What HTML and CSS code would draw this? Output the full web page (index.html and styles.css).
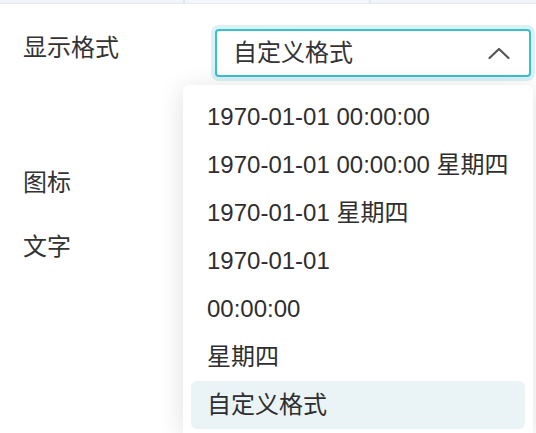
FILE: index.html
```html
<!DOCTYPE html>
<html lang="zh-CN">
<head>
<meta charset="utf-8">
<title>显示格式</title>
<link rel="stylesheet" href="styles.css">
</head>
<body>
<div class="topbar">
  <div class="cell cell-a"></div>
  <div class="cell cell-b"></div>
  <div class="cell cell-c"></div>
</div>
<div class="form">
  <div class="row row-first">
    <div class="label label-first">显示格式</div>
    <div class="field">
      <div class="select">
        <span class="select-value">自定义格式</span>
        <svg class="chevron" width="22" height="12" viewBox="0 0 22 12">
          <polyline points="1.5,11 11,2 20.5,11" fill="none" stroke="#555" stroke-width="2.2" stroke-linecap="round" stroke-linejoin="round"/>
        </svg>
      </div>
      <div class="dropdown">
        <div class="option">1970-01-01 00:00:00</div>
        <div class="option">1970-01-01 00:00:00 星期四</div>
        <div class="option">1970-01-01 星期四</div>
        <div class="option">1970-01-01</div>
        <div class="option">00:00:00</div>
        <div class="option">星期四</div>
        <div class="option selected">自定义格式</div>
      </div>
    </div>
  </div>
  <div class="row row-icon">
    <div class="label">图标</div>
  </div>
  <div class="row">
    <div class="label">文字</div>
  </div>
</div>
</body>
</html>
```
FILE: styles.css
```css
* { box-sizing: border-box; }
html, body { margin: 0; padding: 0; }
body {
  width: 536px;
  height: 433px;
  overflow: hidden;
  background: #ffffff;
  color: #333333;
  font-family: "Liberation Sans", "Noto Sans CJK SC", sans-serif;
  font-size: 24px;
}
.topbar {
  display: flex;
  height: 4px;
  gap: 2px;
  background: #e3e8ee;
  border-bottom: 1px solid #e6ebf1;
}
.cell { height: 3px; background: #f1f4f8; }
.cell-a { width: 183px; }
.cell-b { width: 184px; background: #f3f6fa; }
.cell-c { flex: 1; }
.form {
  padding: 25px 0 0 23px;
}
.row {
  display: flex;
  align-items: flex-start;
  height: 64px;
}
.row-first {
  height: 48px;
  margin-bottom: 74px;
}
.label {
  width: 192px;
  line-height: 64px;
  height: 64px;
}
.label-first {
  line-height: 34px;
  height: 34px;
  margin-top: 2px;
}
.field {
  position: relative;
  width: 316px;
}
.select {
  height: 48px;
  border: 2px solid #3bbfcc;
  border-radius: 4px;
  box-shadow: 0 0 0 4px rgba(59, 191, 204, 0.2);
  display: flex;
  align-items: center;
  justify-content: space-between;
  padding: 0 19px 0 16px;
  background: #fff;
}
.select-value { line-height: 44px; }
.chevron { display: block; }
.dropdown {
  position: absolute;
  top: 56px;
  left: -32px;
  width: 350px;
  height: 348px;
  background: #fff;
  border-radius: 6px 6px 0 0;
  padding: 8px;
  box-shadow: 0 4px 26px rgba(0, 0, 0, 0.13);
}
.option {
  height: 48px;
  line-height: 48px;
  padding: 0 16px;
  white-space: nowrap;
  border-radius: 6px;
  color: #2e2e2e;
}
.option.selected {
  background: #eaf3f6;
}
```
